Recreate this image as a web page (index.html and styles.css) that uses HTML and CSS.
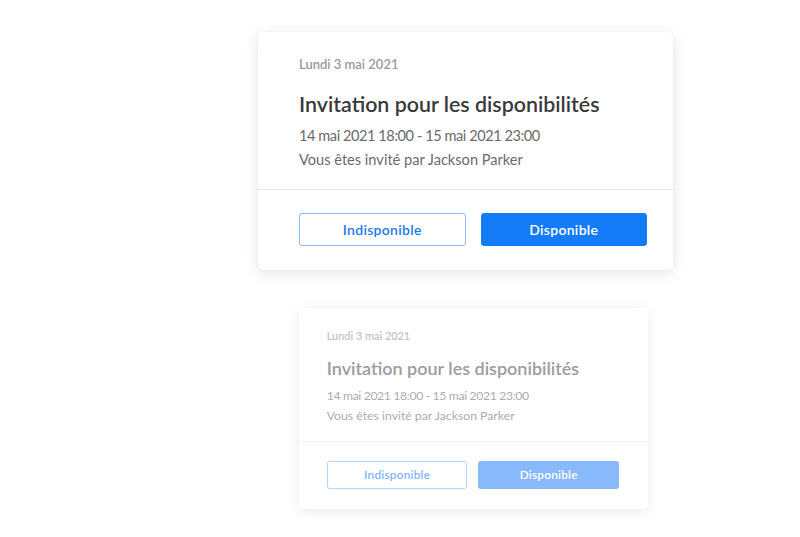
FILE: index.html
```html
<!DOCTYPE html>
<html lang="fr">
<head>
<meta charset="utf-8">
<title>Invitations</title>
<link rel="stylesheet" href="styles.css">
</head>
<body>
<main class="stage">
  <article class="card">
    <div class="card__body">
      <p class="card__date">Lundi 3 mai 2021</p>
      <h2 class="card__title">Invitation pour les disponibilités</h2>
      <p class="card__line card__line--range">14 mai 2021 18:00 - 15 mai 2021 23:00</p>
      <p class="card__line">Vous êtes invité par Jackson Parker</p>
    </div>
    <div class="card__actions">
      <button class="btn btn--outline">Indisponible</button>
      <button class="btn btn--primary">Disponible</button>
    </div>
  </article>
  <div class="stage__second">
    <article class="card card--muted">
      <div class="card__body">
        <p class="card__date">Lundi 3 mai 2021</p>
        <h2 class="card__title">Invitation pour les disponibilités</h2>
        <p class="card__line card__line--range">14 mai 2021 18:00 - 15 mai 2021 23:00</p>
        <p class="card__line">Vous êtes invité par Jackson Parker</p>
      </div>
      <div class="card__actions">
        <button class="btn btn--outline">Indisponible</button>
        <button class="btn btn--primary">Disponible</button>
      </div>
    </article>
  </div>
</main>
</body>
</html>
```
FILE: styles.css
```css
html, body {
  margin: 0;
  padding: 0;
  background: #ffffff;
  overflow: hidden;
}
body {
  font-family: "Lato", "Noto Sans", sans-serif;
  width: 800px;
  height: 537px;
}
.stage {
  padding: 32px 0 0 258px;
  display: flex;
  flex-direction: column;
  align-items: flex-start;
}
.card {
  width: 415px;
  background: #ffffff;
  border-radius: 5px;
  box-shadow: 0 3px 16px rgba(0, 0, 0, 0.11), 0 0 2px rgba(0, 0, 0, 0.04);
  box-sizing: border-box;
}
.card__body {
  padding: 24px 26px 17px 41px;
  border-bottom: 1px solid #e6e6e6;
}
.card__date {
  margin: 0;
  font-size: 13px;
  line-height: 16px;
  font-weight: 600;
  color: #9a9a9a;
}
.card__title {
  margin: 19px 0 7px;
  font-size: 21.4px;
  line-height: 26px;
  font-weight: 600;
  color: #3a3a3a;
}
.card__line {
  margin: 0;
  font-size: 14.6px;
  line-height: 24px;
  color: #6b6b6b;
}
.card__line--range {
  letter-spacing: -0.45px;
}
.card__actions {
  padding: 23px 26px 24px 41px;
  display: flex;
  gap: 15px;
}
.btn {
  flex: 1;
  height: 33px;
  border-radius: 3px;
  font-family: inherit;
  font-size: 14px;
  font-weight: 600;
  letter-spacing: 0.3px;
  cursor: pointer;
  box-sizing: border-box;
}
.btn--outline {
  background: #ffffff;
  border: 1px solid #8dbcf8;
  color: #1b7ae8;
}
.btn--primary {
  background: #147cf8;
  border: 1px solid #147cf8;
  color: #ffffff;
}
.stage__second {
  margin-top: 38px;
  padding-left: 41px;
}
.card--muted {
  zoom: 0.84;
  box-shadow: 0 3px 16px rgba(0, 0, 0, 0.08), 0 0 2px rgba(0, 0, 0, 0.03);
}
.card--muted .card__body {
  padding: 25px 34px 17px 33px;
  border-bottom-color: #f0f0f0;
}
.card--muted .card__actions {
  padding: 23px 34px 24px 33px;
  gap: 13px;
}
.card--muted .card__date { color: #c4c4c4; }
.card--muted .card__title { color: #9c9c9c; }
.card--muted .card__line { color: #acacac; }
.card--muted .btn--outline {
  border-color: #b3d4fb;
  color: #80b5f8;
}
.card--muted .btn--primary {
  background: #88bafb;
  border-color: #88bafb;
}
```
